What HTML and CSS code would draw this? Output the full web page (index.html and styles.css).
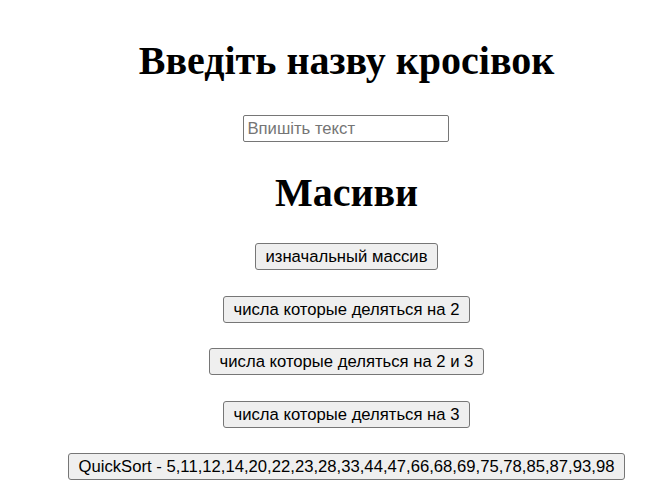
FILE: index.html
```html
<!DOCTYPE html>
<html lang="uk">
<head>
<meta charset="utf-8">
<title>Масиви</title>
<link rel="stylesheet" href="styles.css">
</head>
<body>
<main class="page">
  <section class="search">
    <h1 class="title">Введіть назву кросівок</h1>
    <input class="field" type="text" placeholder="Впишіть текст">
  </section>
  <section class="arrays">
    <h1 class="title">Масиви</h1>
    <div class="actions">
      <button class="btn" type="button">изначальный массив</button>
      <button class="btn" type="button">числа которые деляться на 2</button>
      <button class="btn" type="button">числа которые деляться на 2 и 3</button>
      <button class="btn" type="button">числа которые деляться на 3</button>
      <button class="btn" type="button">QuickSort - 5,11,12,14,20,22,23,28,33,44,47,66,68,69,75,78,85,87,93,98</button>
    </div>
  </section>
</main>
</body>
</html>
```
FILE: styles.css
```css
body {
  margin: 0;
  background: #fff;
  color: #000;
}
.page {
  box-sizing: border-box;
  width: 100%;
  padding: 38px 0 0 43px;
  display: flex;
  flex-direction: column;
  align-items: center;
  gap: 27.5px;
}
.search,
.arrays {
  display: flex;
  flex-direction: column;
  align-items: center;
}
.search {
  gap: 31px;
}
.arrays {
  gap: 27.5px;
}
.title {
  margin: 0;
  font-family: "Liberation Serif", "Times New Roman", serif;
  font-weight: bold;
  font-size: 40px;
  line-height: 46px;
  height: 46px;
  white-space: nowrap;
}
.field {
  box-sizing: border-box;
  width: 206px;
  height: 27px;
  margin: 0;
  padding: 1px 3px;
  border: 1px solid #767676;
  border-radius: 2px;
  font-family: "Liberation Sans", Arial, sans-serif;
  font-size: 16.67px;
  color: #000;
  background: #fff;
}
.field::placeholder {
  color: #757575;
}
.actions {
  display: flex;
  flex-direction: column;
  align-items: center;
  gap: 25.5px;
}
.btn {
  box-sizing: border-box;
  height: 27px;
  margin: 0;
  padding: 0 9.5px;
  border: 1px solid #767676;
  border-radius: 3px;
  background: #efefef;
  color: #000;
  font-family: "Liberation Sans", Arial, sans-serif;
  font-size: 16.67px;
  line-height: 25px;
  white-space: nowrap;
}
```
